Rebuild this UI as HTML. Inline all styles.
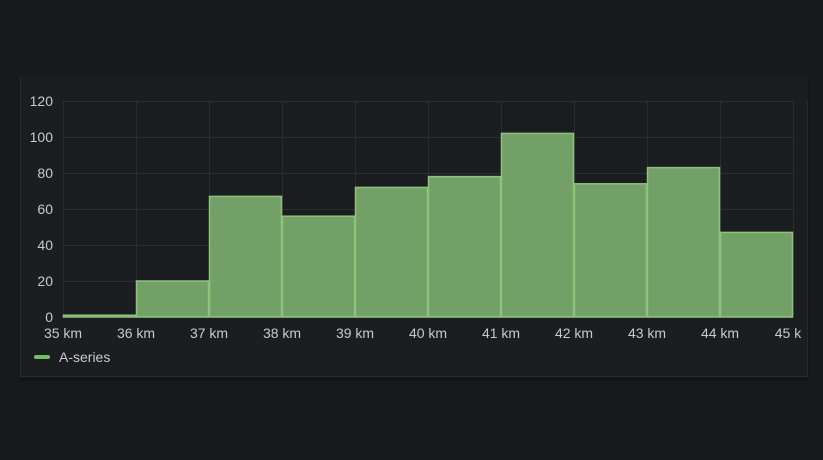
<!DOCTYPE html>
<html><head><style>
html,body{margin:0;padding:0;background:#18191d;width:823px;height:460px;overflow:hidden;font-family:"Liberation Sans",sans-serif}
</style></head><body>
<svg width="823" height="460" xmlns="http://www.w3.org/2000/svg" style="position:absolute;left:0;top:0">
<rect x="0" y="0" width="823" height="460" fill="#18191d"/>
<rect x="20" y="77" width="789" height="304" fill="#131417"/>
<rect x="20" y="77" width="788" height="300" fill="#1c1d21"/>
<line x1="20.5" y1="77" x2="20.5" y2="377" stroke="#2a2c30"/>
<line x1="20" y1="376.5" x2="808" y2="376.5" stroke="#2a2c30"/>
<line x1="807.5" y1="100" x2="807.5" y2="377" stroke="#26282c"/>
<g stroke="#2b2d31" stroke-width="1">
<line x1="63" y1="101.5" x2="793" y2="101.5"/>
<line x1="63" y1="137.5" x2="793" y2="137.5"/>
<line x1="63" y1="173.5" x2="793" y2="173.5"/>
<line x1="63" y1="209.5" x2="793" y2="209.5"/>
<line x1="63" y1="245.5" x2="793" y2="245.5"/>
<line x1="63" y1="281.5" x2="793" y2="281.5"/>
<line x1="63.5" y1="101" x2="63.5" y2="317"/>
<line x1="136.5" y1="101" x2="136.5" y2="317"/>
<line x1="209.5" y1="101" x2="209.5" y2="317"/>
<line x1="282.5" y1="101" x2="282.5" y2="317"/>
<line x1="355.5" y1="101" x2="355.5" y2="317"/>
<line x1="428.5" y1="101" x2="428.5" y2="317"/>
<line x1="501.5" y1="101" x2="501.5" y2="317"/>
<line x1="574.5" y1="101" x2="574.5" y2="317"/>
<line x1="647.5" y1="101" x2="647.5" y2="317"/>
<line x1="720.5" y1="101" x2="720.5" y2="317"/>
<line x1="793.5" y1="101" x2="793.5" y2="317"/>
</g>
<g fill="#73a067" stroke="#8cc47c" stroke-width="1.5">
<rect x="63.5" y="315.2" width="72" height="1.8"/>
<rect x="136.5" y="281" width="72" height="36"/>
<rect x="209.5" y="196.4" width="72" height="120.6"/>
<rect x="282.5" y="216.2" width="72" height="100.8"/>
<rect x="355.5" y="187.4" width="72" height="129.6"/>
<rect x="428.5" y="176.6" width="72" height="140.4"/>
<rect x="501.5" y="133.4" width="72" height="183.6"/>
<rect x="574.5" y="183.8" width="72" height="133.2"/>
<rect x="647.5" y="167.6" width="72" height="149.4"/>
<rect x="720.5" y="232.4" width="72" height="84.6"/>
</g>
<line x1="63" y1="317.5" x2="793" y2="317.5" stroke="#73a067" stroke-width="1"/>
<g fill="#c8c9cc" font-size="14" text-anchor="end" font-family="Liberation Sans, sans-serif">
<text x="53" y="106">120</text>
<text x="53" y="142">100</text>
<text x="53" y="178">80</text>
<text x="53" y="214">60</text>
<text x="53" y="250">40</text>
<text x="53" y="286">20</text>
<text x="53" y="322">0</text>
</g>
<g fill="#c8c9cc" font-size="14" text-anchor="middle" font-family="Liberation Sans, sans-serif">
<text x="63" y="338">35 km</text>
<text x="136" y="338">36 km</text>
<text x="209" y="338">37 km</text>
<text x="282" y="338">38 km</text>
<text x="355" y="338">39 km</text>
<text x="428" y="338">40 km</text>
<text x="501" y="338">41 km</text>
<text x="574" y="338">42 km</text>
<text x="647" y="338">43 km</text>
<text x="720" y="338">44 km</text>
<text x="788" y="338">45 k</text>
</g>
<rect x="34" y="355" width="16" height="4" rx="2" fill="#73bf69"/>
<text x="59" y="362" fill="#c8c9cc" font-size="14" font-family="Liberation Sans, sans-serif">A-series</text>
</svg>
</body></html>
